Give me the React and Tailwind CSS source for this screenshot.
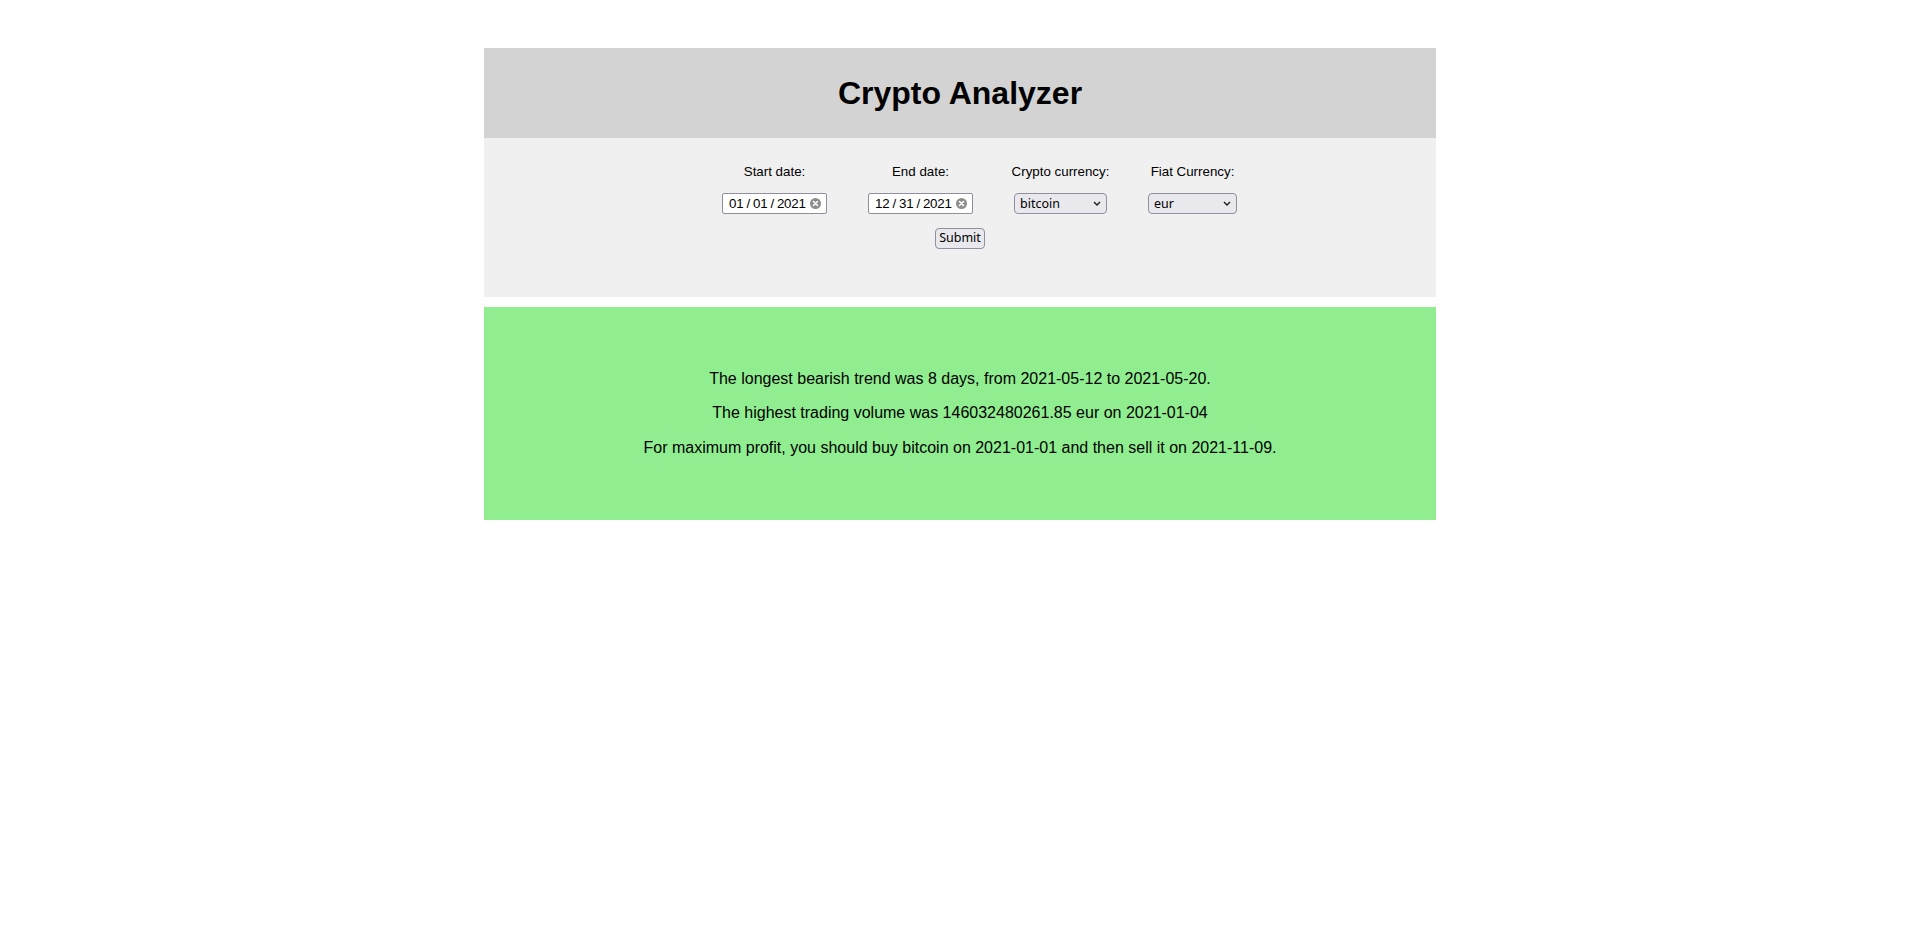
import { useState } from "react"

const ClearIcon = () => (
    <svg width="11" height="11" viewBox="0 0 12 12">
        <circle cx="6" cy="6" r="6" fill="#8d8d8d" />
        <path d="M3.8 3.8l4.4 4.4M8.2 3.8l-4.4 4.4" stroke="#fff" strokeWidth="1.7" strokeLinecap="round" />
    </svg>
)

const Chevron = () => (
    <svg width="8" height="5" viewBox="0 0 8 5">
        <path d="M1 1l3 3 3-3" fill="none" stroke="#1b1b1b" strokeWidth="1.4" />
    </svg>
)

const DateField = ({ value }) => (
    <div className="flex h-[21px] w-[105px] items-center justify-between rounded-[2px] border border-[#8f8f9d] bg-white pl-[6px] pr-[5px] text-[13.33px]">
        <span className="flex gap-[3px] tracking-[-0.2px]">
            {value.split("/").map((part, i) => (
                <span key={i} className="flex gap-[3px]">
                    {i > 0 && <span>/</span>}
                    <span>{part}</span>
                </span>
            ))}
        </span>
        <ClearIcon />
    </div>
)

const SelectField = ({ value, width }) => (
    <div className={"flex h-[21px] items-center justify-between rounded-[4px] border border-[#8f8f9d] bg-[#e9e9ed] pl-[5px] pr-[5px] font-['Noto_Sans',sans-serif] text-[12.5px] " + width}>
        <span className="pt-[2px]">{value}</span>
        <Chevron />
    </div>
)

export default function App() {
    const [crypto] = useState("bitcoin")
    const [fiat] = useState("eur")

    const columns = [
        { label: "Start date:", width: "w-[105px]", field: <DateField value="01/01/2021" /> },
        { label: "End date:", width: "w-[105px]", field: <DateField value="12/31/2021" /> },
        { label: "Crypto currency:", width: "w-[93px]", field: <SelectField value={crypto} width="w-[93px]" /> },
        { label: "Fiat Currency:", width: "w-[89px]", field: <SelectField value={fiat} width="w-[89px]" /> },
    ]

    return (
        <div className="min-h-screen bg-white font-['Liberation_Sans',Arial,sans-serif] text-black">
            <main className="mx-auto w-[952px] pt-12">
                <header className="flex h-[90px] items-center justify-center bg-[#d3d3d3]">
                    <h1 className="text-[32px] font-bold">Crypto Analyzer</h1>
                </header>

                <form className="flex flex-col items-center bg-[#f0f0f0] pt-[26px] pb-[48px]">
                    <div className="flex justify-center gap-[41px] pl-[39px] w-full">
                        {columns.map((col) => (
                            <div key={col.label} className={"flex flex-col items-center " + col.width}>
                                <label className="whitespace-nowrap text-[13.33px] leading-[15px]">{col.label}</label>
                                <div className="mt-[14px]">{col.field}</div>
                            </div>
                        ))}
                    </div>
                    <button
                        type="button"
                        className="mt-[14px] h-[21px] w-[50px] rounded-[4px] border border-[#8f8f9d] bg-[#e9e9ed] font-['Noto_Sans',sans-serif] text-[12.5px] leading-none"
                    >
                        Submit
                    </button>
                </form>

                <section className="mt-[10px] flex flex-col items-center gap-4 bg-[#90ee90] pt-[63px] pb-[63px] text-[16px] leading-[18.4px]">
                    <p>The longest bearish trend was 8 days, from 2021-05-12 to 2021-05-20.</p>
                    <p>The highest trading volume was 146032480261.85 eur on 2021-01-04</p>
                    <p>For maximum profit, you should buy bitcoin on 2021-01-01 and then sell it on 2021-11-09.</p>
                </section>
            </main>
        </div>
    )
}
